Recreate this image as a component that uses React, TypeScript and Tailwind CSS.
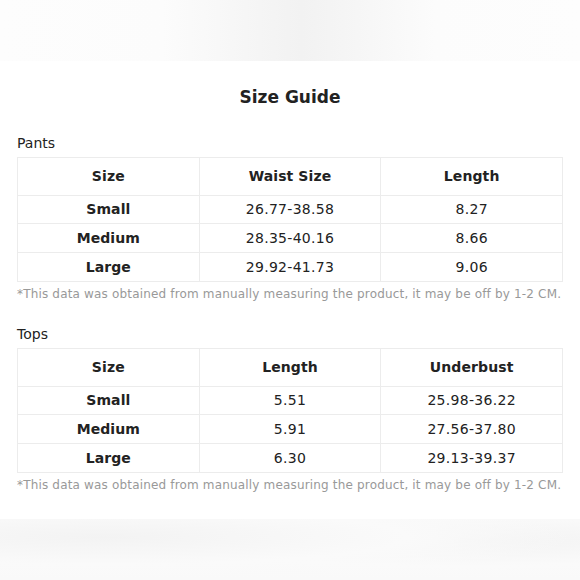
import React from 'react';

type Table = {
  label: string;
  head: string[];
  rows: string[][];
};

const tables: Table[] = [
  {
    label: 'Pants',
    head: ['Size', 'Waist Size', 'Length'],
    rows: [
      ['Small', '26.77-38.58', '8.27'],
      ['Medium', '28.35-40.16', '8.66'],
      ['Large', '29.92-41.73', '9.06'],
    ],
  },
  {
    label: 'Tops',
    head: ['Size', 'Length', 'Underbust'],
    rows: [
      ['Small', '5.51', '25.98-36.22'],
      ['Medium', '5.91', '27.56-37.80'],
      ['Large', '6.30', '29.13-39.37'],
    ],
  },
];

const note = '*This data was obtained from manually measuring the product, it may be off by 1-2 CM.';

// first body row is a touch shorter than the rest
const rowHeights = ['h-[28px]', 'h-[29px]', 'h-[29px]'];

function SizeTable({ label, head, rows }: Table) {
  return (
    <div className="flex flex-col">
      <div className="text-[14px] leading-[20px] text-[#222] mb-[4px]">{label}</div>
      <table className="w-full border-collapse table-fixed">
        <thead>
          <tr className="h-[38px]">
            {head.map((h) => (
              <th key={h} className="border border-[#ececec] text-[14px] font-bold text-[#222] text-center tracking-[0.1px]">
                {h}
              </th>
            ))}
          </tr>
        </thead>
        <tbody>
          {rows.map((r, ri) => (
            <tr key={r[0]} className={rowHeights[ri]}>
              {r.map((c, i) => (
                <td
                  key={i}
                  className={`border border-[#ececec] text-[14px] text-center text-[#222] ${i === 0 ? 'font-bold tracking-[0.1px]' : 'tracking-[0.3px]'}`}
                >
                  {c}
                </td>
              ))}
            </tr>
          ))}
        </tbody>
      </table>
      <div className="text-[12px] leading-[16px] text-[#999] mt-[4px] whitespace-nowrap tracking-[0.17px]">{note}</div>
    </div>
  );
}

export default function App() {
  return (
    <div className="w-[580px] h-[580px] bg-white flex flex-col overflow-hidden font-['DejaVu_Sans',sans-serif]">
      {/* blurred backdrop strip at top */}
      <div className="h-[61px] shrink-0 bg-[linear-gradient(90deg,#fdfdfd_0%,#fcfcfc_28%,#f7f7f7_40%,#f2f2f2_52%,#f7f7f7_64%,#fcfcfc_75%,#fdfdfd_100%)]" />

      <div className="flex-1 flex flex-col px-[17px] pt-[24px]">
        <h1 className="text-[17px] leading-[24px] font-bold text-[#222] text-center mb-[24px]">Size Guide</h1>
        <SizeTable {...tables[0]} />
        <div className="h-[22px]" />
        <SizeTable {...tables[1]} />
      </div>

      {/* blurred backdrop strip at bottom */}
      <div className="h-[61px] shrink-0 bg-[radial-gradient(ellipse_at_18%_30%,#f3f3f3_0%,#fafafa_45%,transparent_70%),radial-gradient(ellipse_at_82%_35%,#f3f3f3_0%,#fafafa_45%,transparent_70%),linear-gradient(180deg,#fbfbfb,#f9f9f9)]" />
    </div>
  );
}
